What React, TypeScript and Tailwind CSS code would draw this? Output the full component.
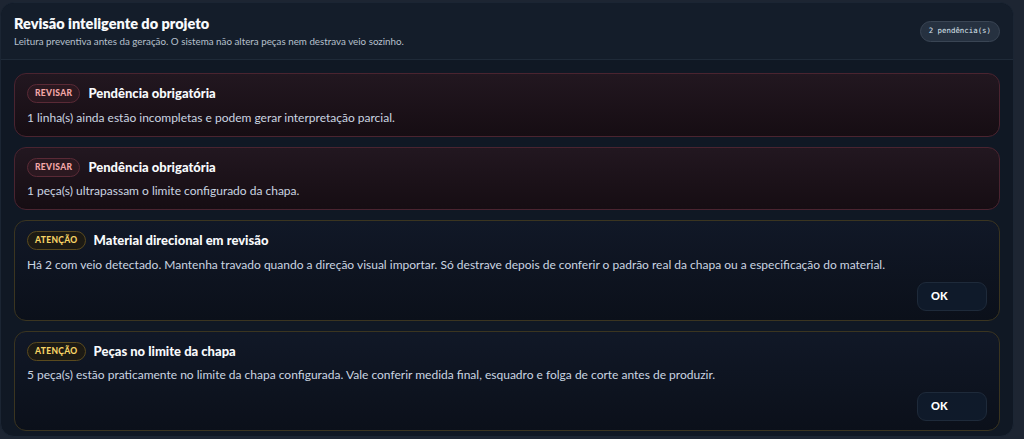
import React from "react";

type Nivel = "revisar" | "atencao";

interface Alerta {
    nivel: Nivel;
    titulo: string;
    texto: string;
    ok?: boolean;
}

const alertas: Alerta[] = [
    {
        nivel: "revisar",
        titulo: "Pendência obrigatória",
        texto: "1 linha(s) ainda estão incompletas e podem gerar interpretação parcial.",
    },
    {
        nivel: "revisar",
        titulo: "Pendência obrigatória",
        texto: "1 peça(s) ultrapassam o limite configurado da chapa.",
    },
    {
        nivel: "atencao",
        titulo: "Material direcional em revisão",
        texto: "Há 2 com veio detectado. Mantenha travado quando a direção visual importar. Só destrave depois de conferir o padrão real da chapa ou a especificação do material.",
        ok: true,
    },
    {
        nivel: "atencao",
        titulo: "Peças no limite da chapa",
        texto: "5 peça(s) estão praticamente no limite da chapa configurada. Vale conferir medida final, esquadro e folga de corte antes de produzir.",
        ok: true,
    },
];

const AlertaCard = ({ alerta }: { alerta: Alerta }) => {
    const revisar = alerta.nivel === "revisar";
    return (
        <div
            className={
                revisar
                    ? "rounded-[12px] border border-[#4a2430] bg-gradient-to-b from-[#221720] to-[#160d13] px-[12px] pt-[10px] pb-[10px]"
                    : "rounded-[12px] border border-[#3b3520] bg-gradient-to-b from-[#111827] to-[#0b101a] px-[12px] pt-[10px] pb-[9px]"
            }
        >
            <div className="flex items-center gap-[8px]">
                <span
                    className={
                        revisar
                            ? "h-[19px] px-[7px] flex items-center rounded-full border border-[#5a2a36] bg-[#2b1820] text-[#f3a7a7] text-[8.5px] font-black tracking-[0.04em]"
                            : "h-[19px] px-[7px] flex items-center rounded-full border border-[#5a4a1e] bg-[#1c1a14] text-[#f6d365] text-[8.5px] font-black tracking-[0.04em]"
                    }
                >
                    {revisar ? "REVISAR" : "ATENÇÃO"}
                </span>
                <span className="text-[13px] font-black text-[#f8fafc]">{alerta.titulo}</span>
            </div>
            <p className="mt-[5px] text-[12px] leading-[17px] text-[#cbd5e1]">{alerta.texto}</p>
            {alerta.ok && (
                <div className="flex justify-end mt-[9px]">
                    <button className="w-[70px] h-[29px] rounded-[9px] border border-[#1e2a3a] bg-[#0f1a2a] text-left pl-[13px] text-[11px] font-black text-white">
                        OK
                    </button>
                </div>
            )}
        </div>
    );
};

export default function App() {
    return (
        <div className="min-h-screen bg-[#1d2532] pt-[2px] pr-[10px] font-['Lato',sans-serif]">
            <section className="h-[435px] rounded-[14px] overflow-hidden bg-[#101824] border border-[#1b2533]">
                <header className="h-[57px] flex items-center justify-between px-[13px] bg-[#141d2a] border-b border-[#1f2a38]">
                    <div>
                        <h1 className="text-[14.5px] font-extrabold leading-[20px] text-[#f8fafc]">Revisão inteligente do projeto</h1>
                        <p className="text-[9.8px] leading-[14px] text-[#b6c0cd]">
                            Leitura preventiva antes da geração. O sistema não altera peças nem destrava veio sozinho.
                        </p>
                    </div>
                    <span className="h-[21px] px-[8px] flex items-center rounded-full border border-[#3a4554] bg-[#263140] text-[7.4px] text-[#dbe3ee] font-['DejaVu_Sans_Mono',monospace]">
                        2 pendência(s)
                    </span>
                </header>
                <div className="flex flex-col gap-[10px] px-[13px] pt-[13px]">
                    {alertas.map((alerta, index) => (
                        <AlertaCard key={index} alerta={alerta} />
                    ))}
                </div>
            </section>
        </div>
    );
}
